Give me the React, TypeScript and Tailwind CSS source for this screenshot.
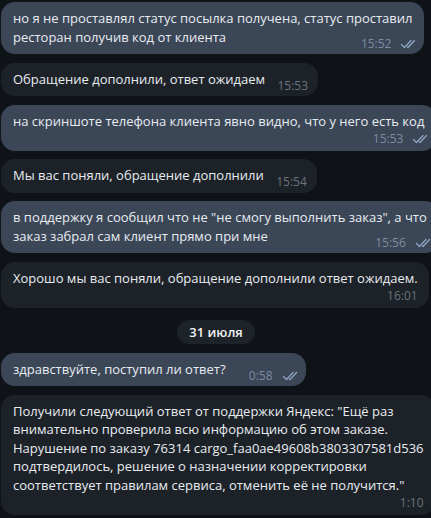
import React from 'react';

type Msg = {
  lines: string[];
  time: string;
  out?: boolean;
  timeBelow?: boolean;
};

const messages: Msg[] = [
  {
    lines: ['но я не проставлял статус посылка получена, статус проставил', 'ресторан получив код от клиента'],
    time: '15:52',
    out: true,
  },
  { lines: ['Обращение дополнили, ответ ожидаем'], time: '15:53' },
  {
    lines: ['на скриншоте телефона клиента явно видно, что у него есть код'],
    time: '15:53',
    out: true,
    timeBelow: true,
  },
  { lines: ['Мы вас поняли, обращение дополнили'], time: '15:54' },
  {
    lines: ['в поддержку я сообщил что не "не смогу выполнить заказ", а что', 'заказ забрал сам клиент прямо при мне'],
    time: '15:56',
    out: true,
  },
  {
    lines: ['Хорошо мы вас поняли, обращение дополнили ответ ожидаем.'],
    time: '16:01',
    timeBelow: true,
  },
];

const after: Msg[] = [
  { lines: ['здравствуйте, поступил ли ответ?'], time: '0:58', out: true },
  {
    lines: [
      'Получили следующий ответ от поддержки Яндекс: "Ещё раз',
      'внимательно проверила всю информацию об этом заказе.',
      'Нарушение по заказу 76314 cargo_faa0ae49608b3803307581d536',
      'подтвердилось, решение о назначении корректировки',
      'соответствует правилам сервиса, отменить её не получится."',
    ],
    time: '1:10',
    timeBelow: true,
  },
];

function Checks() {
  return (
    <svg width="18" height="10" viewBox="0 0 18 10" fill="none" stroke="#8ea4c2" strokeWidth="1.3" strokeLinecap="round" strokeLinejoin="round">
      <path d="M1.5 5.5 L4.5 8.5 L11 1.5" />
      <path d="M7.5 8 L8 8.5 L14.5 1.5" />
    </svg>
  );
}

function Meta({ m }: { m: Msg }) {
  return (
    <span className={`flex items-center gap-[9px] text-[12px] leading-[14px] ${m.out ? 'text-[#7d8ca1]' : 'text-[#6a727c]'}`}>
      {m.time}
      {m.out && <Checks />}
    </span>
  );
}

function Bubble({ m }: { m: Msg }) {
  const bg = m.out ? 'bg-[#3b4657]' : 'bg-[#1d2229]';
  const pr = m.out ? 'pr-[12px]' : 'pr-[11px]';
  return (
    <div className={`relative w-fit rounded-[14px] ${bg} pl-[12px] ${pr} pt-[7px] ${m.timeBelow ? 'pb-[4.5px]' : 'pb-[8px]'}`}>
      <div className="leading-[18.5px]">
        {m.lines.map((l, i) => (
          <div key={i} className="whitespace-nowrap">
            {l}
            {!m.timeBelow && i === m.lines.length - 1 && (
              <span className={`inline-block ${m.out ? 'w-[68px]' : 'w-[42px]'}`} />
            )}
          </div>
        ))}
      </div>
      {m.timeBelow ? (
        <div className={`flex h-[16px] items-end justify-end ${m.out ? '-mr-[6px]' : ''}`}>
          <Meta m={m} />
        </div>
      ) : (
        <div className={`absolute bottom-[3.5px] ${m.out ? 'right-[6px]' : 'right-[10px]'}`}>
          <Meta m={m} />
        </div>
      )}
    </div>
  );
}

export default function App() {
  return (
    <div
      className="h-[518px] w-[431px] overflow-hidden bg-[#0f1216] pl-[1px] pt-[2px] text-[13px] text-[#e8ecf0]"
      style={{ fontFamily: '"Open Sans", "Noto Sans", sans-serif' }}
    >
      <div className="flex flex-col gap-[8.5px]">
        {messages.map((m, i) => (
          <Bubble key={i} m={m} />
        ))}
        <div className="mt-[3.5px] mb-[0.5px] flex justify-center">
          <div className="rounded-full bg-[#1e2329] px-[12px] py-[3px] text-[13px] font-semibold leading-[18px] text-[#f2f4f6]">
            31 июля
          </div>
        </div>
        {after.map((m, i) => (
          <Bubble key={i} m={m} />
        ))}
      </div>
    </div>
  );
}
